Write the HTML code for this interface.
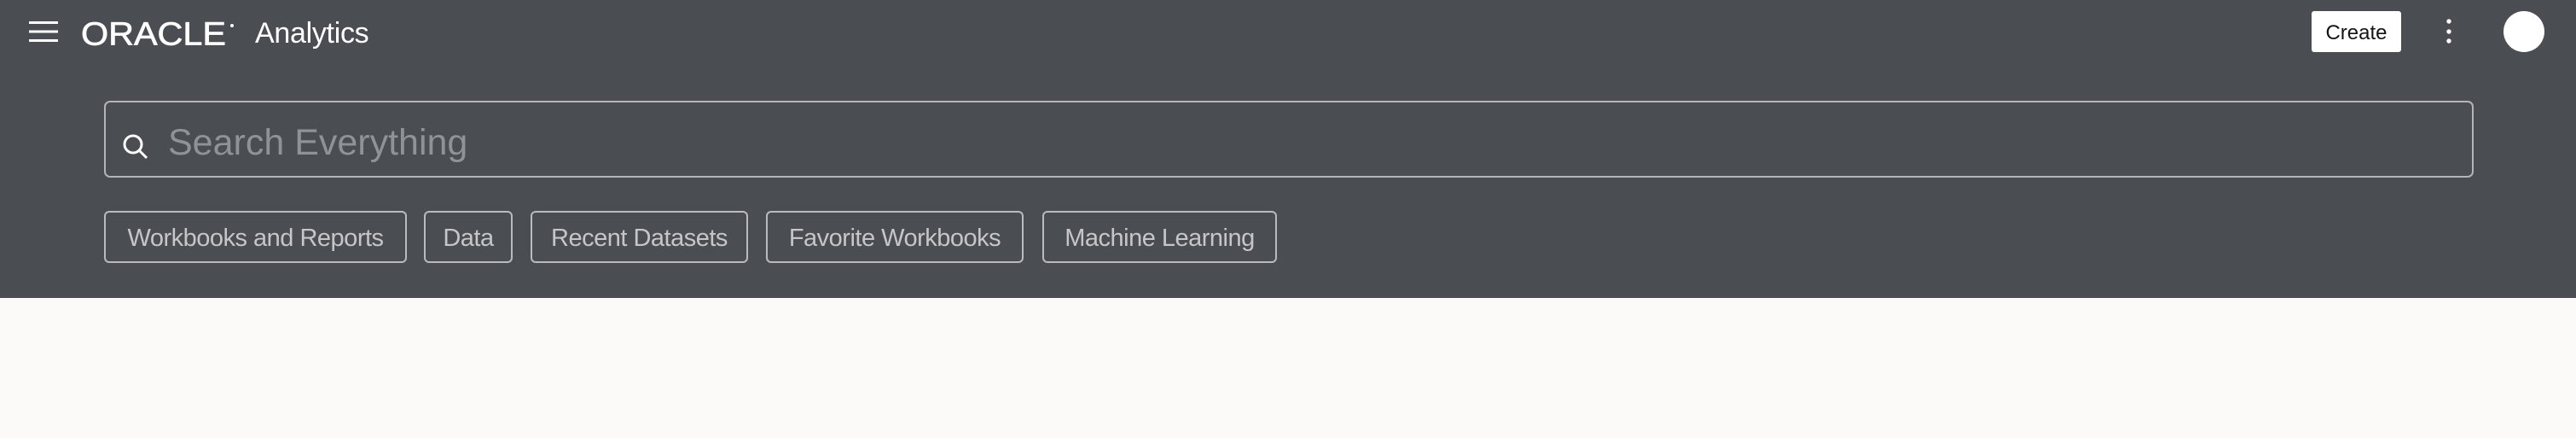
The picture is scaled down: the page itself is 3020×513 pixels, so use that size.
<!DOCTYPE html>
<html><head><meta charset="utf-8"><style>
*{margin:0;padding:0;box-sizing:border-box}
body{width:3020px;height:513px;background:#fbfaf9;font-family:"Liberation Sans",sans-serif;position:relative;overflow:hidden}
.hdr{position:absolute;left:0;top:0;width:3020px;height:349px;background:#4a4d52}
.abs{position:absolute}
.chip{position:absolute;top:247px;height:61px;border:2px solid #b9bbbe;border-radius:6px;color:#c4c6c9;font-size:29px;line-height:61px;text-align:center;white-space:nowrap;letter-spacing:-0.5px}
</style></head><body>
<div class="hdr"></div>
<svg class="abs" style="left:34px;top:25px" width="34" height="24"><rect x="0" y="0" width="34" height="3" fill="#fff"/><rect x="0" y="10.5" width="34" height="3" fill="#fff"/><rect x="0" y="21" width="34" height="3" fill="#fff"/></svg>
<svg class="abs" style="left:93px;top:24px" width="190" height="32"><text x="2" y="28" font-family="Liberation Sans" font-size="34" fill="#fff" stroke="#fff" stroke-width="0.6" textLength="170" lengthAdjust="spacingAndGlyphs" transform="translate(0,-3) scale(1,1.12)">ORACLE</text><circle cx="179" cy="6" r="2" fill="#fff"/></svg>
<div class="abs" style="left:299px;top:19px;color:#fff;font-size:34px;line-height:40px;letter-spacing:-0.3px">Analytics</div>
<div class="abs" style="left:122px;top:118px;width:2778px;height:90px;border:2px solid #b3b5b8;border-radius:7px"></div>
<svg class="abs" style="left:143px;top:156px" width="32" height="32"><circle cx="13" cy="13" r="10" stroke="#fff" stroke-width="3" fill="none"/><line x1="20" y1="20" x2="29" y2="29" stroke="#fff" stroke-width="3"/></svg>
<div class="abs" style="left:197px;top:142px;color:#8f9296;font-size:43px;line-height:50px">Search Everything</div>
<div class="chip" style="left:122px;width:355px">Workbooks and Reports</div>
<div class="chip" style="left:497px;width:104px">Data</div>
<div class="chip" style="left:622px;width:255px">Recent Datasets</div>
<div class="chip" style="left:898px;width:302px">Favorite Workbooks</div>
<div class="chip" style="left:1222px;width:275px">Machine Learning</div>
<div class="abs" style="left:2710px;top:13px;width:105px;height:48px;background:#fff;border-radius:3px;color:#161513;font-size:24px;line-height:52px;text-align:center">Create</div>
<svg class="abs" style="left:2865px;top:20px" width="12" height="34"><circle cx="6" cy="5" r="2.7" fill="#fff"/><circle cx="6" cy="17" r="2.7" fill="#fff"/><circle cx="6" cy="28" r="2.7" fill="#fff"/></svg>
<div class="abs" style="left:2935px;top:13px;width:48px;height:48px;border-radius:50%;background:#fff"></div>
</body></html>
